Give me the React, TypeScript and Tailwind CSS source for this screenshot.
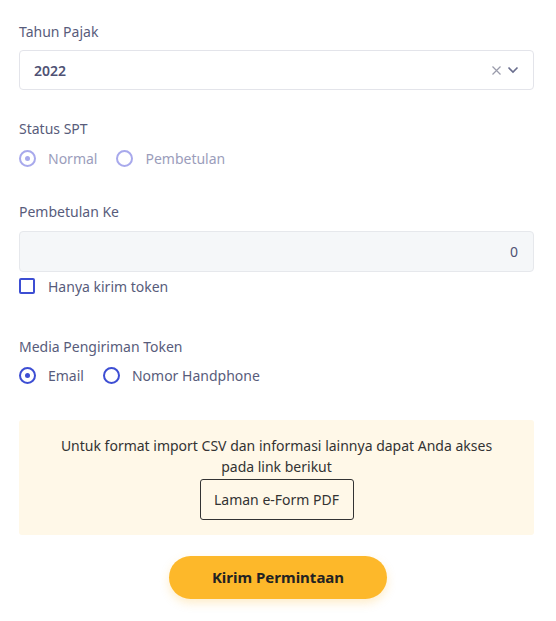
import React from "react";

export default function App() {
  return (
    <div className="w-[556px] h-[621px] bg-white px-[19px] pt-[22px]" style={{ fontFamily: '"Noto Sans", "Open Sans", sans-serif' }}>
      <div className="text-[14px] leading-[20px] text-[#585c7b]">Tahun Pajak</div>
      <div className="mt-[8px] h-[40px] w-[515px] border border-[#e3e4ea] rounded-[4px] flex items-center pl-[14px] pr-[14px]">
        <span className="text-[14px] font-semibold text-[#4f5274]">2022</span>
        <div className="ml-auto flex items-center gap-[5px]">
          <svg width="11" height="11" viewBox="0 0 11 11"><path d="M1.5 1.5 L9.5 9.5 M9.5 1.5 L1.5 9.5" stroke="#9a9bab" strokeWidth="1.2" fill="none" /></svg>
          <svg width="12" height="8" viewBox="0 0 12 8"><path d="M1.5 1.5 L6 6 L10.5 1.5" stroke="#6a6e8e" strokeWidth="1.6" fill="none" /></svg>
        </div>
      </div>

      <div className="mt-[29px] text-[14px] leading-[20px] text-[#585c7b]">Status SPT</div>
      <div className="mt-[9px] flex items-center h-[20px]">
        <span className="w-[17px] h-[17px] rounded-full border-[2px] border-[#a8a9ec] flex items-center justify-center">
          <span className="w-[5px] h-[5px] rounded-full bg-[#a8a9ec]" />
        </span>
        <span className="ml-[12px] text-[14px] text-[#9b9dbb]">Normal</span>
        <span className="ml-[19px] w-[17px] h-[17px] rounded-full border-[2px] border-[#a8a9ec]" />
        <span className="ml-[12px] text-[14px] text-[#9b9dbb]">Pembetulan</span>
      </div>

      <div className="mt-[34px] text-[14px] leading-[20px] text-[#585c7b]">Pembetulan Ke</div>
      <div className="mt-[9px] h-[41px] w-[515px] border border-[#e6e8ec] bg-[#f5f7f9] rounded-[4px] flex items-center justify-end pr-[15px]">
        <span className="text-[14px] text-[#4f5274]">0</span>
      </div>
      <div className="mt-[4px] flex items-center h-[20px]">
        <span className="w-[16px] h-[16px] rounded-[2px] border-[2px] border-[#3d4ed3]" />
        <span className="ml-[13px] text-[14px] text-[#585c7b]">Hanya kirim token</span>
      </div>

      <div className="mt-[41px] text-[14px] leading-[20px] text-[#585c7b]">Media Pengiriman Token</div>
      <div className="mt-[8px] flex items-center h-[20px]">
        <span className="w-[17px] h-[17px] rounded-full border-[2px] border-[#3d4ed3] flex items-center justify-center">
          <span className="w-[5px] h-[5px] rounded-full bg-[#3d4ed3]" />
        </span>
        <span className="ml-[12px] text-[14px] text-[#585c7b]">Email</span>
        <span className="ml-[19px] w-[17px] h-[17px] rounded-full border-[2px] border-[#3d4ed3]" />
        <span className="ml-[12px] text-[14px] text-[#585c7b]">Nomor Handphone</span>
      </div>

      <div className="mt-[35px] w-[515px] h-[115px] bg-[#fff8e8] rounded-[3px] flex flex-col items-center pt-[15px]">
        <div className="text-[14px] leading-[21px] text-[#333333] text-center px-[40px]">
          Untuk format import CSV dan informasi lainnya dapat Anda akses pada link berikut
        </div>
        <div className="mt-[2px] h-[41px] w-[154px] border border-[#333333] rounded-[3px] flex items-center justify-center text-[14px] text-[#333333]">
          Laman e-Form PDF
        </div>
      </div>

      <div className="mt-[21px] flex justify-center">
        <div className="h-[43px] w-[218px] rounded-full bg-[#fdb82a] flex items-center justify-center text-[15px] font-bold text-[#222222] shadow-[0_4px_10px_rgba(253,184,42,0.25)]">
          Kirim Permintaan
        </div>
      </div>
    </div>
  );
}
